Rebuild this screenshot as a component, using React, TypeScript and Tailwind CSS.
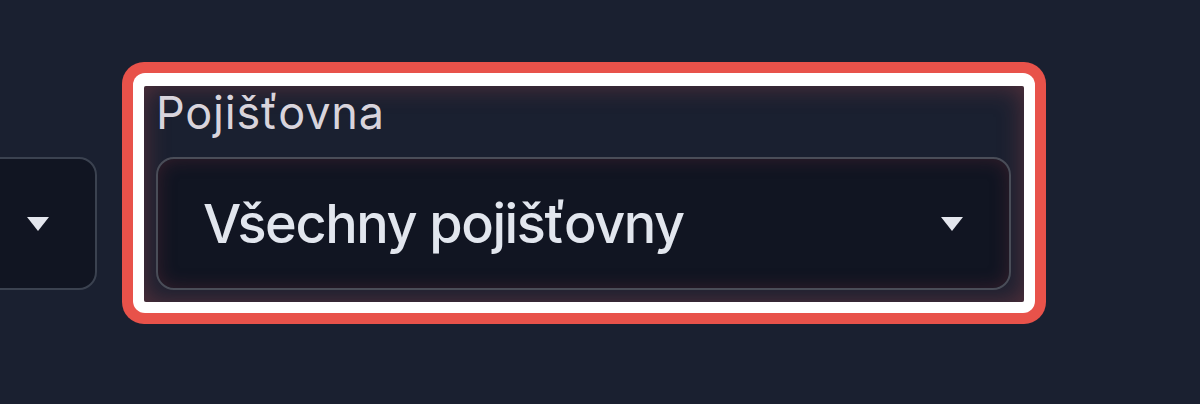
import React from "react";

function Caret({ className }: { className?: string }) {
  return (
    <svg width="22" height="14" viewBox="0 0 22 14" className={className}>
      <path d="M0 0 H22 L11 14 Z" fill="#e4e7ee" />
    </svg>
  );
}

export default function App() {
  return (
    <div
      className="w-[1200px] h-[404px] bg-[#1a2030] overflow-hidden"
      style={{ fontFamily: "Inter, 'Noto Sans', sans-serif" }}
    >
      <div className="flex items-start pt-[62px] ml-[-120px] gap-[25px]">
        {/* left partial select */}
        <div className="mt-[95px] w-[217px] h-[133px] rounded-[18px] border-2 border-[#3b4250] bg-[#111522] flex items-center justify-end pr-[46px] shrink-0">
          <Caret />
        </div>

        {/* highlighted field */}
        <div className="shrink-0 w-[924px] h-[262px] rounded-[22px] bg-[#e8524a] p-[11px]">
          <div className="w-full h-full rounded-[12px] bg-white pt-[13px] px-[11px] pb-[11px]">
            <div className="w-full h-full rounded-[2px] bg-[#1a2030] shadow-[inset_0_0_26px_rgba(200,80,80,0.35)] pl-[12px] pr-[13px] flex flex-col">
              <div className="mt-[4px] text-[45px] leading-none text-[#d8d4dc] font-normal tracking-[0.8px]">
                Pojišťovna
              </div>
              <div className="mt-[22px] h-[133px] rounded-[18px] border-2 border-[#4a4d58] bg-[#111522] shadow-[inset_0_0_18px_rgba(120,50,60,0.35)] flex items-center justify-between pl-[45px] pr-[46px]">
                <span className="text-[54px] leading-none font-medium text-[#e2e6ee] tracking-[-1.4px]">
                  Všechny pojišťovny
                </span>
                <Caret />
              </div>
            </div>
          </div>
        </div>
      </div>
    </div>
  );
}
